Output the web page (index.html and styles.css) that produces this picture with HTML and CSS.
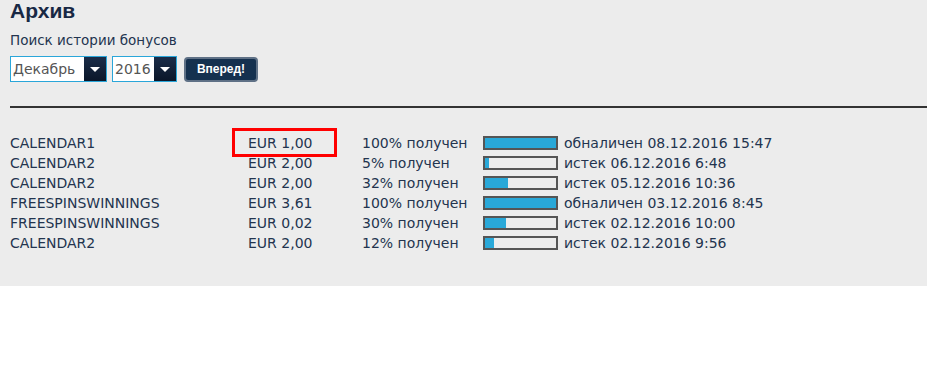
FILE: index.html
```html
<!doctype html>
<html lang="ru">
<head>
    <meta charset="UTF-8">
    <title>Архив</title>
    <link rel="stylesheet" href="styles.css">
</head>
<body>
<div class="archive">
    <h1>Архив</h1>
    <p class="hint">Поиск истории бонусов</p>
    <div class="filter">
        <div class="select month"><span>Декабрь</span><i></i></div>
        <div class="select year"><span>2016</span><i></i></div>
        <a class="go" href="javascript:;">Вперед!</a>
    </div>
    <div class="line"></div>
    <div class="list">
        <div class="row">
            <span class="name">CALENDAR1</span>
            <span class="sum mark">EUR 1,00</span>
            <span class="pct">100% получен</span>
            <span class="bar"><b style="width:100%"></b></span>
            <span class="state">обналичен 08.12.2016 15:47</span>
        </div>
        <div class="row">
            <span class="name">CALENDAR2</span>
            <span class="sum">EUR 2,00</span>
            <span class="pct">5% получен</span>
            <span class="bar"><b style="width:5%"></b></span>
            <span class="state">истек 06.12.2016 6:48</span>
        </div>
        <div class="row">
            <span class="name">CALENDAR2</span>
            <span class="sum">EUR 2,00</span>
            <span class="pct">32% получен</span>
            <span class="bar"><b style="width:32%"></b></span>
            <span class="state">истек 05.12.2016 10:36</span>
        </div>
        <div class="row">
            <span class="name">FREESPINSWINNINGS</span>
            <span class="sum">EUR 3,61</span>
            <span class="pct">100% получен</span>
            <span class="bar"><b style="width:100%"></b></span>
            <span class="state">обналичен 03.12.2016 8:45</span>
        </div>
        <div class="row">
            <span class="name">FREESPINSWINNINGS</span>
            <span class="sum">EUR 0,02</span>
            <span class="pct">30% получен</span>
            <span class="bar"><b style="width:30%"></b></span>
            <span class="state">истек 02.12.2016 10:00</span>
        </div>
        <div class="row">
            <span class="name">CALENDAR2</span>
            <span class="sum">EUR 2,00</span>
            <span class="pct">12% получен</span>
            <span class="bar"><b style="width:12%"></b></span>
            <span class="state">истек 02.12.2016 9:56</span>
        </div>
    </div>
</div>
</body>
</html>
```
FILE: styles.css
```css
*,*:after{
    margin:0;
    padding:0;
    box-sizing:border-box;
}
body{
    background:#fff;
    font-family:"DejaVu Sans",Verdana,sans-serif;
    font-size:14px;
    color:#23344f;
}
.archive{
    background:#ececec;
    height:286px;
    padding:0 0 0 10px;
}
.archive h1{
    font-family:"Liberation Sans",Arial,sans-serif;
    font-size:21px;
    line-height:22px;
    color:#182844;
    font-weight:bold;
}
.hint{
    margin-top:9px;
    line-height:18px;
    font-size:13.5px;
}
.filter{
    display:flex;
    align-items:center;
    margin-top:7px;
    height:26px;
}
.select{
    display:flex;
    height:26px;
    border:1px solid #2aa6d9;
    background:#fff;
    margin-right:5px;
}
.select span{
    flex:1;
    line-height:24px;
    padding-left:2px;
    font-size:14px;
    color:#555;
}
.select i{
    width:22px;
    background:linear-gradient(#1a2c48,#0b1629);
    position:relative;
}
.select i:after{
    content:"";
    position:absolute;
    left:6px;
    top:10px;
    border-left:5px solid transparent;
    border-right:5px solid transparent;
    border-top:5px solid #fff;
}
.month{ width:97px; }
.year{ width:65px; }
.go{
    margin-left:2px;
    width:74px;
    height:25px;
    border-radius:4px;
    background:#15314f;
    border:2px solid #5f7186;
    color:#fff;
    font-family:"Liberation Sans",Arial,sans-serif;
    font-weight:bold;
    font-size:12px;
    text-align:center;
    line-height:21px;
    text-decoration:none;
}
.line{
    margin-top:24px;
    height:2px;
    background:#333;
}
.list{
    margin-top:25px;
}
.row{
    display:flex;
    align-items:center;
    height:20px;
    line-height:20px;
}
.name{ width:238px; }
.sum{ width:114px; position:relative; }
.pct{ width:121px; }
.bar{
    width:75px;
    height:14px;
    border:2px solid #555;
    margin-right:6px;
    background:#ececec;
}
.bar b{
    display:block;
    height:100%;
    background:#29a8d8;
}
.mark:after{
    content:"";
    position:absolute;
    left:-16px;
    top:-5px;
    width:105px;
    height:29px;
    border:3px solid #f00;
}
```
